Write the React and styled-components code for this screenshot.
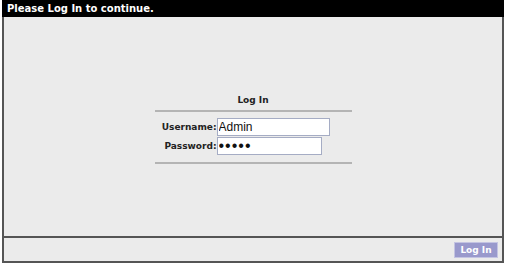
import React from "react";
import styled, { createGlobalStyle } from "styled-components";

const Global = createGlobalStyle`
  html, body { margin: 0; padding: 0; background: #fff; }
  body { font-family: "DejaVu Sans", Verdana, sans-serif; }
`;

const Frame = styled.div`
  box-sizing: border-box;
  margin-left: 2px;
  width: 502px;
  height: 263px;
  border: 2px solid #555;
  border-top: 0;
  background: #ebebeb;
  display: flex;
  flex-direction: column;
`;

const TitleBar = styled.div`
  height: 17px;
  background: #000;
  color: #fff;
  font-size: 10px;
  font-weight: bold;
  line-height: 17px;
  margin: 0 -2px;
  padding-left: 5px;
`;

const Main = styled.div`
  flex: 1;
  display: flex;
  align-items: center;
  justify-content: center;
  padding-top: 3px;
`;

const Form = styled.div`
  width: 197px;
  display: flex;
  flex-direction: column;
  align-items: stretch;
`;

const Heading = styled.div`
  text-align: center;
  font-size: 9px;
  font-weight: bold;
  color: #222;
  height: 14px;
  line-height: 14px;
  margin-bottom: 3px;
`;

const Rule = styled.div`
  height: 2px;
  background: #b4b4b4;
`;

const Rows = styled.div`
  display: grid;
  grid-template-columns: 62px auto;
  row-gap: 1px;
  padding: 6px 0 7px 0;
  align-items: center;
`;

const Label = styled.label`
  text-align: right;
  font-size: 9px;
  font-weight: bold;
  color: #222;
`;

const Input = styled.input`
  box-sizing: border-box;
  width: ${(p) => p.$w}px;
  height: 18px;
  border: 1px solid #a5acc4;
  background: #fff;
  padding: 0 1px;
  font-family: "Liberation Sans", Arial, sans-serif;
  font-size: ${(p) => (p.type === "password" ? 16 : 12)}px;
  letter-spacing: ${(p) => (p.type === "password" ? 1 : 0)}px;
  color: #111;
  outline: none;
  margin: 0;
`;

const Footer = styled.div`
  height: 23px;
  border-top: 2px solid #555;
  display: flex;
  align-items: center;
  justify-content: flex-end;
  padding-right: 4px;
`;

const Button = styled.button`
  box-sizing: border-box;
  width: 44px;
  height: 16px;
  background: #9999cc;
  border: 1px solid #c4c4e2;
  color: #fff;
  font-family: "DejaVu Sans", sans-serif;
  font-size: 9px;
  font-weight: bold;
  padding: 0;
  line-height: 14px;
`;

export default function App() {
  return (
    <>
      <Global />
      <Frame>
        <TitleBar>Please Log In to continue.</TitleBar>
        <Main>
          <Form>
            <Heading>Log In</Heading>
            <Rule />
            <Rows>
              <Label>Username:</Label>
              <Input $w={113} defaultValue="Admin" />
              <Label>Password:</Label>
              <Input $w={105} type="password" defaultValue="admin" />
            </Rows>
            <Rule />
          </Form>
        </Main>
        <Footer>
          <Button>Log In</Button>
        </Footer>
      </Frame>
    </>
  );
}
